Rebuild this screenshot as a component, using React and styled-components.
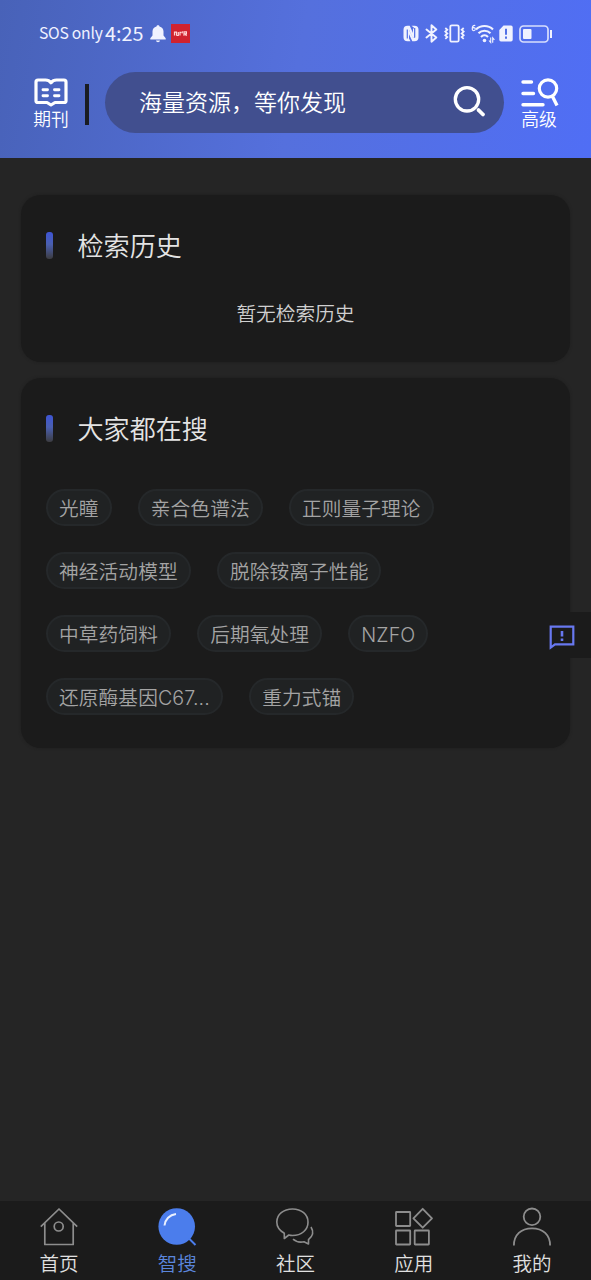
import React from "react"
import styled, { createGlobalStyle } from "styled-components"

const GlobalStyle = createGlobalStyle`
  * {
    box-sizing: border-box;
  }
  body {
    margin: 0;
    background: #252525;
    font-family: "Noto Sans CJK SC", "Noto Sans", sans-serif;
    font-weight: 350;
  }
`

const Screen = styled.div`
  display: flex;
  flex-direction: column;
  width: 100%;
  height: 1280px;
  overflow: hidden;
  background: #252525;
`

const Header = styled.header`
  display: flex;
  flex-direction: column;
  height: 158px;
  flex: none;
  background: linear-gradient(100deg, #4862b8 0%, #5570dd 50%, #506ef5 100%);
  color: #fff;
`

const StatusBar = styled.div`
  display: flex;
  justify-content: space-between;
  align-items: center;
  height: 67px;
  padding: 0 38px 0 39px;
  color: #f0f2ff;
`

const StatusGroup = styled.div`
  display: flex;
  align-items: center;
  gap: ${props => props.gap}px;
`

const Carrier = styled.span`
  width: 62px;
  font-size: 15.7px;
  font-weight: 400;
  line-height: 20px;
  letter-spacing: -0.25px;
  padding-bottom: 2px;
  white-space: nowrap;
`

const Clock = styled.span`
  width: 38px;
  margin-right: 3px;
  font-size: 19.8px;
  font-weight: 400;
  line-height: 20px;
  padding-bottom: 2px;
`

const AppBadge = styled.span`
  display: flex;
  align-items: center;
  justify-content: center;
  width: 19px;
  height: 19px;
  margin-left: 1px;
  background: #d0222f;
`

const SearchRow = styled.div`
  display: flex;
  align-items: center;
  height: 61px;
  margin-top: 5px;
  padding-left: 33px;
`

const HeaderAction = styled.button`
  display: flex;
  flex-direction: column;
  align-items: center;
  width: 36px;
  margin-top: 2px;
  padding: 0;
  border: 0;
  background: none;
  color: #fff;
  font-family: inherit;
  font-size: 17.8px;
  font-weight: inherit;
  line-height: 22px;
  white-space: nowrap;

  svg {
    flex: none;
    overflow: visible;
  }
`

const Divider = styled.span`
  width: 4px;
  height: 41px;
  margin: 4px 16px 0;
  background: #191c22;
`

const SearchBox = styled.div`
  display: flex;
  align-items: center;
  justify-content: space-between;
  width: 399px;
  height: 61px;
  margin-right: 17px;
  padding: 0 18px 3px 34px;
  border-radius: 31px;
  background: #414f8f;
  font-size: 23px;
  line-height: 30px;
`

const Content = styled.main`
  display: flex;
  flex: 1;
  flex-direction: column;
  gap: 16px;
  padding: 37px 21px 0;
`

const Card = styled.section`
  height: ${props => props.height}px;
  padding: 31px 25px 0;
  border-radius: 20px;
  background: #1b1b1b;
  box-shadow: 0 0 3px rgba(27, 27, 27, 0.7);
`

const CardTitle = styled.h2`
  display: flex;
  align-items: center;
  gap: 24.5px;
  height: 38px;
  margin: 0;
  color: #e4e4e4;
  font-size: 26.1px;
  font-weight: inherit;
  line-height: 38px;

  &::before {
    content: "";
    width: 7px;
    height: 27px;
    border-radius: 3px;
    background: linear-gradient(#3e55d6, #4a5fb0 45%, #3c3c40);
  }
`

const Empty = styled.p`
  margin: 34px 0 0;
  color: #d0d0d0;
  font-size: 19.7px;
  line-height: 30px;
  text-align: center;
`

const TagList = styled.div`
  display: flex;
  flex-wrap: wrap;
  gap: 26px 26.2px;
  margin-top: 42px;
  padding-right: 26px;
`

const Tag = styled.span`
  height: 37px;
  padding: 0 11px;
  border: 2px solid #25282a;
  border-radius: 19px;
  background: #202223;
  color: #a4a4a4;
  font-family: Inter, "Noto Sans CJK SC", sans-serif;
  font-size: 19.7px;
  line-height: 36px;
  letter-spacing: 0.1px;
  white-space: nowrap;
`

const Feedback = styled.button`
  position: absolute;
  top: 612px;
  right: 0;
  display: flex;
  align-items: center;
  width: 48px;
  height: 46px;
  padding: 5px 0 0 6px;
  border: 0;
  background: #1b1b1b;
`

const TabBar = styled.nav`
  display: grid;
  grid-template-columns: repeat(5, 1fr);
  height: 79px;
  flex: none;
  background: #1b1b1b;
`

const Tab = styled.a`
  display: flex;
  flex-direction: column;
  align-items: center;
  padding-top: 6px;
  color: ${props => (props.$active ? "#5b86dc" : "#e0e0e0")};
  font-size: 19.5px;
  line-height: 28px;

  svg {
    margin-bottom: 3px;
    overflow: visible;
  }
`

const Bell = () => (
  <svg width="16" height="18" viewBox="0 0 16 18" fill="currentColor">
    <path d="M8 .3c.9 0 1.400.5 1.500 1.200 2.500.7 4 2.500 4 5v4l2.200 2.700v1.300H.3v-1.300l2.200-2.700V6.500c0-2.500 1.500-4.300 4-5C6.600.8 7.100.3 8 .3zM6 15.600h4c-.2 1-1 1.600-2 1.600s-1.800-.6-2-1.600z" />
  </svg>
)

const BadgeMark = () => (
  <svg width="15" height="7" viewBox="0 0 15 7" fill="none" stroke="#ffd5d5" strokeWidth="1.200">
    <path d="M1.500 5.500V2.200h2v3.300M5.300 2v3.500H3.500M7 5.500V2.300h1.300M9.500 1.300 9 3.300M11 5.800V1.800h2.400v2H11m1.200 0 1.300 2" />
  </svg>
)

const Nfc = () => (
  <svg width="16" height="17" viewBox="0 0 16 17">
    <path d="M4.500.8h2.200L10 8V3.500h1.500v9L9.800 13 6 5v8.500l1.500 2.700h-3A4 4 0 0 1 .5 12.200V4.800A4 4 0 0 1 4.500.8z" fill="currentColor" />
    <path d="M8.500.8h3a4 4 0 0 1 4 4v7.400a4 4 0 0 1-4 4H9.300L4.500 6v6.500h1V4l4.500 8.700h2V3.500z" fill="currentColor" />
    <path d="M4.300 13.500V4.500M11.700 12.500v-9.500" stroke="#5270e6" strokeWidth="1.200" />
  </svg>
)

const Bluetooth = () => (
  <svg width="13" height="19" viewBox="0 0 13 19" fill="none" stroke="currentColor" strokeWidth="1.900" strokeLinejoin="round" strokeLinecap="round">
    <path d="m1.500 5.500 9.800 8-4.800 4.200V1.300l4.800 4.200-9.800 8" />
  </svg>
)

const Vibrate = () => (
  <svg width="21" height="19" viewBox="0 0 21 19" fill="none" stroke="currentColor" strokeWidth="1.800">
    <rect x="6.300" y="1.300" width="8.400" height="16.400" rx="1.500" />
    <path d="m1.300 4 2 1.800-2 1.800 2 1.900-2 1.800 2 1.800-2 1.800M19.700 4l-2 1.800 2 1.800-2 1.900 2 1.800-2 1.800 2 1.800" />
  </svg>
)

const WifiGlyph = styled.svg`
  margin-right: -2px;
`

const Wifi = () => (
  <WifiGlyph width="24" height="20" viewBox="0 0 24 20" fill="none" stroke="currentColor" strokeWidth="2.100">
    <path d="M4.300 1.500C2.500 1 1.200 2.300 1.200 4.500c0 1.500.7 2.200 1.600 2.200s1.500-.7 1.500-1.600-.6-1.500-1.500-1.500-1.400.5-1.600 1" strokeWidth="1.100" />
    <path d="M5 5.500c4.600-4.600 12.400-4.600 17 0M7.500 9.300c3.400-3.500 8.600-3.500 12 0M10 12.900c2-2 5-2 7 0" />
    <circle cx="13.500" cy="16.500" r="1.800" fill="currentColor" stroke="none" />
    <path d="M19.700 13.500v5l-1.700-2M21.700 18.800v-5l1.700 2" strokeWidth="1.100" />
  </WifiGlyph>
)

const SimAlert = () => (
  <svg width="14" height="17" viewBox="0 0 14 17">
    <path d="M4.500.5H12A1.700 1.700 0 0 1 13.700 2.200v12.600A1.700 1.700 0 0 1 12 16.500H2A1.700 1.700 0 0 1 .3 14.800V5z" fill="currentColor" />
    <path d="M7 3.700v6M7 11.500v2.200" stroke="#5270e6" strokeWidth="2" />
  </svg>
)

const Battery = () => (
  <svg width="34" height="18" viewBox="0 0 34 18" fill="none" stroke="currentColor">
    <rect x="1" y="1" width="28" height="16" rx="3.500" strokeWidth="1.700" opacity=".85" />
    <rect x="4" y="4" width="8.500" height="10" rx="1" fill="currentColor" stroke="none" />
    <path d="M32 5v8" strokeWidth="2" />
  </svg>
)

const Book = () => (
  <svg width="34" height="29" viewBox="0 0 34 29" fill="none" stroke="currentColor" strokeWidth="3.200" strokeLinejoin="round">
    <path d="M2 4q0-2 2-2h7.500q3.500 0 5.500 2.800Q19 2 22.500 2H30q2 0 2 2v19q0 1.500-2 1.500h-9L17 27l-4-2.500H4q-2 0-2-1.500z" />
    <path d="M9 11.800h4.500M20.500 11.800H25M9 17.800h4.500M20.500 17.800H25" strokeLinecap="round" strokeWidth="2.900" />
  </svg>
)

const Search = () => (
  <svg width="33" height="33" viewBox="0 0 33 33" fill="none" stroke="currentColor" strokeWidth="3.300" strokeLinecap="round">
    <circle cx="14" cy="14.300" r="11.700" />
    <path d="m25.500 25 4.500 4.500" strokeWidth="3.800" />
  </svg>
)

const Advanced = () => (
  <svg width="37" height="29" viewBox="0 0 37 29" fill="none" stroke="currentColor" strokeWidth="3.400">
    <path d="M2 4h8.500M2 15.500h10.500M2 26.700h20" strokeLinecap="round" />
    <circle cx="27" cy="10.500" r="8.700" strokeWidth="3.200" />
    <path d="m31.500 18.500 4.500 9" />
  </svg>
)

const FeedbackIcon = () => (
  <svg width="26" height="25" viewBox="0 0 26 25" fill="none" stroke="#6878f0" strokeWidth="2.200">
    <path d="M1.700 1.700h22.600v17.600H6L1.700 22.600z" />
    <path d="M13 6v5.500M13 13.500v2.500" strokeWidth="2.600" />
  </svg>
)

const Home = () => (
  <svg width="38" height="39" viewBox="0 0 38 39" fill="none" stroke="#8d8d8d" strokeWidth="1.700" strokeLinejoin="round">
    <path d="M.8 19.700 19 2l18.200 17.700M4.800 16v21.500h28.400V16" />
    <circle cx="18.700" cy="19.500" r="4.500" />
  </svg>
)

const SmartSearch = () => (
  <svg width="38" height="39" viewBox="0 0 38 39" fill="none">
    <circle cx="18.700" cy="19.500" r="18.300" fill="#4b7dec" />
    <path d="m31 31.500 6.500 6.500" stroke="#4b7dec" strokeWidth="2" />
    <path d="M6.500 18.500c.7-6 5-10.700 11.500-11.500" stroke="#e9f0ff" strokeWidth="2" />
  </svg>
)

const Community = () => (
  <svg width="38" height="39" viewBox="0 0 38 39" fill="none" stroke="#8d8d8d" strokeWidth="1.600" strokeLinejoin="round">
    <path d="M8.300 31.500V26.300C3.500 23.500.8 19.500.8 15 .8 7.500 7.500 2 16.500 2S32 7.500 32 15.200 25.500 28.500 16.500 28.500c-1.500 0-2.500-.2-3.700-.5z" />
    <path d="M35 20c2.500 4 2.500 8.500-2.500 12.700v4.300l-4.500-2.200c-4 .7-8.500-.3-11-2.600" />
  </svg>
)

const Apps = () => (
  <svg width="38" height="39" viewBox="0 0 38 39" fill="none" stroke="#8d8d8d" strokeWidth="1.800" strokeLinejoin="round">
    <rect x="1" y="5" width="14.200" height="14" rx=".5" />
    <rect x="1" y="23.500" width="14.200" height="14" rx=".5" />
    <rect x="19.700" y="23.500" width="14.200" height="14" rx=".5" />
    <path d="m27.700 1.800 9.300 9.500-9.300 9.400-9.300-9.400z" />
  </svg>
)

const Profile = () => (
  <svg width="38" height="39" viewBox="0 0 38 39" fill="none" stroke="#8d8d8d" strokeWidth="1.800">
    <circle cx="19" cy="9.800" r="8.300" />
    <path d="M.9 38.500C.9 28 8 21.300 19 21.300S37.100 28 37.100 38.500" />
  </svg>
)

const trending = [
  "光瞳",
  "亲合色谱法",
  "正则量子理论",
  "神经活动模型",
  "脱除铵离子性能",
  "中草药饲料",
  "后期氧处理",
  "NZFO",
  "还原酶基因C67...",
  "重力式锚",
]

const tabs = [
  { label: "首页", Icon: Home },
  { label: "智搜", Icon: SmartSearch, active: true },
  { label: "社区", Icon: Community },
  { label: "应用", Icon: Apps },
  { label: "我的", Icon: Profile },
]

const App = () => {
  return (
    <Screen>
      <GlobalStyle />
      <Header>
        <StatusBar>
          <StatusGroup gap={4}>
            <Carrier>SOS only</Carrier>
            <Clock>4:25</Clock>
            <Bell />
            <AppBadge>
              <BadgeMark />
            </AppBadge>
          </StatusGroup>
          <StatusGroup gap={6}>
            <Nfc />
            <Bluetooth />
            <Vibrate />
            <Wifi />
            <SimAlert />
            <Battery />
          </StatusGroup>
        </StatusBar>
        <SearchRow>
          <HeaderAction>
            <Book />
            期刊
          </HeaderAction>
          <Divider />
          <SearchBox>
            海量资源，等你发现
            <Search />
          </SearchBox>
          <HeaderAction>
            <Advanced />
            高级
          </HeaderAction>
        </SearchRow>
      </Header>
      <Content>
        <Card height={167}>
          <CardTitle>检索历史</CardTitle>
          <Empty>暂无检索历史</Empty>
        </Card>
        <Card height={370}>
          <CardTitle>大家都在搜</CardTitle>
          <TagList>
            {trending.map(word => (
              <Tag key={word}>{word}</Tag>
            ))}
          </TagList>
        </Card>
      </Content>
      <Feedback aria-label="反馈">
        <FeedbackIcon />
      </Feedback>
      <TabBar>
        {tabs.map(({ label, Icon, active }) => (
          <Tab key={label} $active={active}>
            <Icon />
            {label}
          </Tab>
        ))}
      </TabBar>
    </Screen>
  )
}

export default App
